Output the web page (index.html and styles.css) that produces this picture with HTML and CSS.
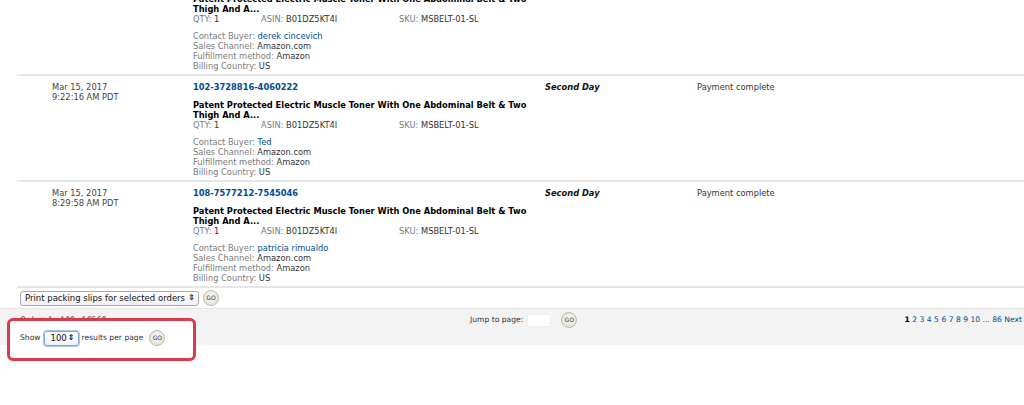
FILE: index.html
```html
<!DOCTYPE html>
<html lang="en">
<head>
  <meta charset="UTF-8">
  <title>Manage Orders</title>
  <link rel="stylesheet" href="styles.css">
</head>
<body>
  <div class="page">
    <table class="orders">
      <tr>
        <td class="cb"></td>
        <td class="date">Mar 15, 2017<br>10:04:51 AM PDT</td>
        <td class="details">
          <a class="order-id" href="#">111-4920417-2261032</a>
          <div class="title">Patent Protected Electric Muscle Toner With One Abdominal Belt &amp; Two Thigh And A...</div>
          <div class="ids">
            <span class="qty"><span class="lbl">QTY:</span> 1</span>
            <span class="asin"><span class="lbl">ASIN:</span> B01DZ5KT4I</span>
            <span><span class="lbl">SKU:</span> MSBELT-01-SL</span>
          </div>
          <div class="meta">
            <div><span class="lbl">Contact Buyer:</span> <a href="#">derek cincevich</a></div>
            <div><span class="lbl">Sales Channel:</span> Amazon.com</div>
            <div><span class="lbl">Fulfillment method:</span> Amazon</div>
            <div><span class="lbl">Billing Country:</span> US</div>
          </div>
        </td>
        <td class="ship">Second Day</td>
        <td class="status">Payment complete</td>
      </tr>
      <tr>
        <td class="cb"></td>
        <td class="date">Mar 15, 2017<br>9:22:16 AM PDT</td>
        <td class="details">
          <a class="order-id" href="#">102-3728816-4060222</a>
          <div class="title">Patent Protected Electric Muscle Toner With One Abdominal Belt &amp; Two Thigh And A...</div>
          <div class="ids">
            <span class="qty"><span class="lbl">QTY:</span> 1</span>
            <span class="asin"><span class="lbl">ASIN:</span> B01DZ5KT4I</span>
            <span><span class="lbl">SKU:</span> MSBELT-01-SL</span>
          </div>
          <div class="meta">
            <div><span class="lbl">Contact Buyer:</span> <a href="#">Ted</a></div>
            <div><span class="lbl">Sales Channel:</span> Amazon.com</div>
            <div><span class="lbl">Fulfillment method:</span> Amazon</div>
            <div><span class="lbl">Billing Country:</span> US</div>
          </div>
        </td>
        <td class="ship">Second Day</td>
        <td class="status">Payment complete</td>
      </tr>
      <tr>
        <td class="cb"></td>
        <td class="date">Mar 15, 2017<br>8:29:58 AM PDT</td>
        <td class="details">
          <a class="order-id" href="#">108-7577212-7545046</a>
          <div class="title">Patent Protected Electric Muscle Toner With One Abdominal Belt &amp; Two Thigh And A...</div>
          <div class="ids">
            <span class="qty"><span class="lbl">QTY:</span> 1</span>
            <span class="asin"><span class="lbl">ASIN:</span> B01DZ5KT4I</span>
            <span><span class="lbl">SKU:</span> MSBELT-01-SL</span>
          </div>
          <div class="meta">
            <div><span class="lbl">Contact Buyer:</span> <a href="#">patricia rimualdo</a></div>
            <div><span class="lbl">Sales Channel:</span> Amazon.com</div>
            <div><span class="lbl">Fulfillment method:</span> Amazon</div>
            <div><span class="lbl">Billing Country:</span> US</div>
          </div>
        </td>
        <td class="ship">Second Day</td>
        <td class="status">Payment complete</td>
      </tr>
    </table>

    <div class="actions">
      <span class="select wide">Print packing slips for selected orders <span class="arrows">&#8661;</span></span>
      <span class="go">GO</span>
    </div>

    <div class="pager">
      <div class="pager-top">
        <span class="count">Orders 1 - 100 of 8560</span>
        <span class="jump">Jump to page: <span class="page-input"></span> <span class="go">GO</span></span>
        <span class="pages"><b>1</b> <a href="#">2</a> <a href="#">3</a> <a href="#">4</a> <a href="#">5</a> <a href="#">6</a> <a href="#">7</a> <a href="#">8</a> <a href="#">9</a> <a href="#">10</a> <a href="#">...</a> <a href="#">86</a> <a href="#">Next</a></span>
      </div>
      <!-- highlighted with a red annotation box -->
      <div class="pager-bottom">
        Show <span class="select focus">100 <span class="arrows">&#8661;</span></span> results per page <span class="go">GO</span>
      </div>
    </div>
  </div>
</body>
</html>
```

FILE: styles.css
```css
body {
  margin: 0;
  background: #fff;
  font-family: "DejaVu Sans", Verdana, sans-serif;
  font-size: 8.3px;
  line-height: 10px;
  color: #222;
}

a {
  color: #004b91;
  text-decoration: none;
}

.page {
  margin-top: -30px;
  height: 435px;
  overflow: hidden;
}

.orders {
  border-collapse: collapse;
  margin-left: 17px;
  width: 1007px;
  table-layout: fixed;
}

.orders tr {
  border-bottom: 2px solid #e6e6e6;
}

.orders td {
  vertical-align: top;
  padding: 6px 0 3px;
}

.cb { width: 35px; }
.date { width: 141px; color: #444; }
.details { width: 352px; }
.ship { width: 152px; font-weight: bold; font-style: italic; color: #111; }
.status { color: #333; }

.order-id {
  display: block;
  font-weight: bold;
  margin-bottom: 8px;
}

.title {
  font-weight: bold;
  color: #000;
  width: 345px;
}

.ids {
  display: flex;
  color: #333;
}

.qty { width: 68px; }
.asin { width: 138px; }

.lbl {
  color: #7a7a7a;
}

.meta {
  margin-top: 7px;
  color: #333;
}

.actions {
  display: flex;
  align-items: center;
  gap: 4px;
  padding: 2px 20px 2px;
}

.select {
  display: inline-flex;
  align-items: center;
  justify-content: space-between;
  height: 13px;
  padding: 0 3px 0 4px;
  border: 1px solid #aaa;
  border-radius: 3px;
  background: linear-gradient(#fff, #f1f1f1);
  color: #111;
  font-size: 8.5px;
}

.select.wide {
  width: 170px;
}

.select.focus {
  width: 24px;
  padding-left: 6px;
  border-color: #7aa7d8;
  box-shadow: 0 0 0 1px #a9c8ec;
}

.arrows {
  font-size: 8px;
  font-weight: bold;
}

.go {
  display: inline-flex;
  align-items: center;
  justify-content: center;
  width: 14px;
  height: 14px;
  border-radius: 50%;
  border: 1px solid #bbb;
  background: radial-gradient(circle at 50% 40%, #fafaf2, #dcdccf);
  font-size: 6px;
  line-height: 6px;
  color: #333;
  vertical-align: middle;
}

.pager {
  background: #f3f3f3;
  border-top: 1px solid #e4e4e4;
  padding: 4px 0 3px 20px;
  height: 29px;
  font-size: 7.6px;
}

.pager-top {
  display: flex;
  align-items: center;
  height: 14px;
}

.count {
  width: 450px;
  color: #333;
}

.jump {
  display: inline-flex;
  align-items: center;
  color: #333;
}

.page-input {
  display: inline-block;
  width: 22px;
  height: 11px;
  margin: 0 10px 0 4px;
  background: #fff;
  border: 1px solid #eee;
}

.pages {
  margin-left: auto;
  padding-right: 2px;
  color: #000;
}

.pager-bottom {
  position: relative;
  z-index: 1;
  display: flex;
  align-items: center;
  gap: 3px;
  width: 150px;
  height: 16px;
  margin-top: 3px;
  color: #333;
}

/* red annotation box drawn around the per-page control */
.pager-bottom::before {
  content: "";
  position: absolute;
  z-index: -1;
  left: -13px;
  top: -12px;
  width: 183px;
  height: 37px;
  border: 3px solid #d93a4c;
  border-radius: 6px;
  background: #fff;
}

.pager-bottom .go {
  margin-left: 3px;
}
```
